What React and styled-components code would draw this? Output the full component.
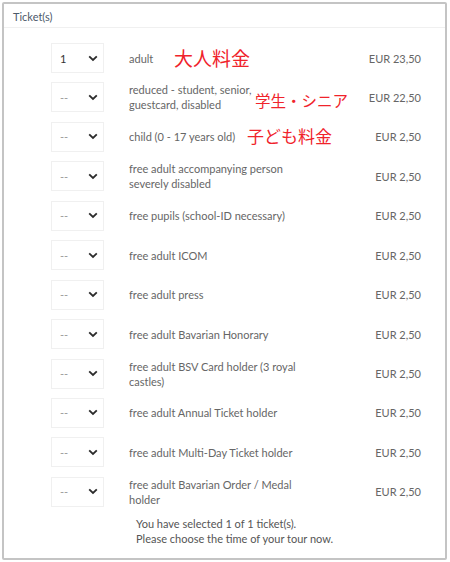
import React from "react";
import styled, { createGlobalStyle } from "styled-components";

const GlobalStyle = createGlobalStyle`
  html, body {
    margin: 0;
    padding: 0;
    background: #ffffff;
  }
  body {
    font-family: Lato, "Liberation Sans", sans-serif;
  }
`;

const Page = styled.div`
  width: 450px;
  height: 562px;
  padding: 2px 3px 2px 2px;
  box-sizing: border-box;
`;

const Panel = styled.section`
  height: 100%;
  box-sizing: border-box;
  border: 2px solid #c4c4c4;
  border-radius: 2px;
  display: flex;
  flex-direction: column;
`;

const Header = styled.div`
  height: 24px;
  padding: 6px 0 0 9px;
  box-sizing: border-box;
  font-size: 11px;
  color: #4d5a6a;
  border-bottom: 1px solid #f0f0f0;
`;

const List = styled.div`
  display: flex;
  flex-direction: column;
  gap: 9.45px;
  padding: 15px 0 0 47px;
`;

const Row = styled.div`
  position: relative;
  display: grid;
  grid-template-columns: 53px 171px 1fr auto;
  align-items: center;
  column-gap: 25px;
  min-height: 30px;
  padding-right: 24px;
  font-size: 11px;
  color: #666;
`;

const Select = styled.div`
  height: 30px;
  box-sizing: border-box;
  border: 1px solid #f0f0f0;
  display: flex;
  align-items: center;
  justify-content: space-between;
  padding: 0 5px 0 8px;
  font-size: 11px;
  color: ${(p) => (p.$empty ? "#9a9a9a" : "#333")};
`;

const Label = styled.div`
  line-height: 15px;
`;

const Price = styled.div`
  grid-column: 4;
  white-space: nowrap;
  color: #666;
`;

const Note = styled.span`
  position: absolute;
  left: ${(p) => p.$left}px;
  top: ${(p) => p.$top}px;
  font-family: "Noto Sans CJK JP", sans-serif;
  font-size: ${(p) => p.$size}px;
  line-height: 1;
  color: #f0232b;
  white-space: nowrap;
`;

const Footer = styled.div`
  padding: 9px 0 0 132px;
  font-size: 11px;
  line-height: 15px;
  color: #555;
`;

const Chevron = () => (
  <svg width="10" height="7" viewBox="0 0 10 7">
    <path d="M1.2 1.3 L5 5 L8.8 1.3" fill="none" stroke="#2b2b2b" strokeWidth="1.8" />
  </svg>
);

const tickets = [
  { qty: "1", label: "adult", price: "EUR 23,50", note: { text: "大人料金", left: 123, top: 5, size: 19 } },
  { qty: "--", label: "reduced - student, senior, guestcard, disabled", price: "EUR 22,50", note: { text: "学生・シニア", left: 204, top: 11, size: 15.5 } },
  { qty: "--", label: "child (0 - 17 years old)", price: "EUR 2,50", note: { text: "子ども料金", left: 196, top: 5, size: 17 } },
  { qty: "--", label: "free adult accompanying person severely disabled", price: "EUR 2,50" },
  { qty: "--", label: "free pupils (school-ID necessary)", price: "EUR 2,50" },
  { qty: "--", label: "free adult ICOM", price: "EUR 2,50" },
  { qty: "--", label: "free adult press", price: "EUR 2,50" },
  { qty: "--", label: "free adult Bavarian Honorary", price: "EUR 2,50" },
  { qty: "--", label: "free adult BSV Card holder (3 royal castles)", price: "EUR 2,50" },
  { qty: "--", label: "free adult Annual Ticket holder", price: "EUR 2,50" },
  { qty: "--", label: "free adult Multi-Day Ticket holder", price: "EUR 2,50" },
  { qty: "--", label: "free adult Bavarian Order / Medal holder", price: "EUR 2,50" },
];

export default function App() {
  return (
    <Page>
      <GlobalStyle />
      <Panel>
        <Header>Ticket(s)</Header>
        <List>
          {tickets.map((t, idx) => (
            <Row key={idx}>
              <Select $empty={t.qty === "--"}>
                <span>{t.qty}</span>
                <Chevron />
              </Select>
              <Label>{t.label}</Label>
              <Price>{t.price}</Price>
              {t.note && (
                <Note $left={t.note.left} $top={t.note.top} $size={t.note.size}>
                  {t.note.text}
                </Note>
              )}
            </Row>
          ))}
        </List>
        <Footer>
          You have selected 1 of 1 ticket(s).
          <br />
          Please choose the time of your tour now.
        </Footer>
      </Panel>
    </Page>
  );
}
